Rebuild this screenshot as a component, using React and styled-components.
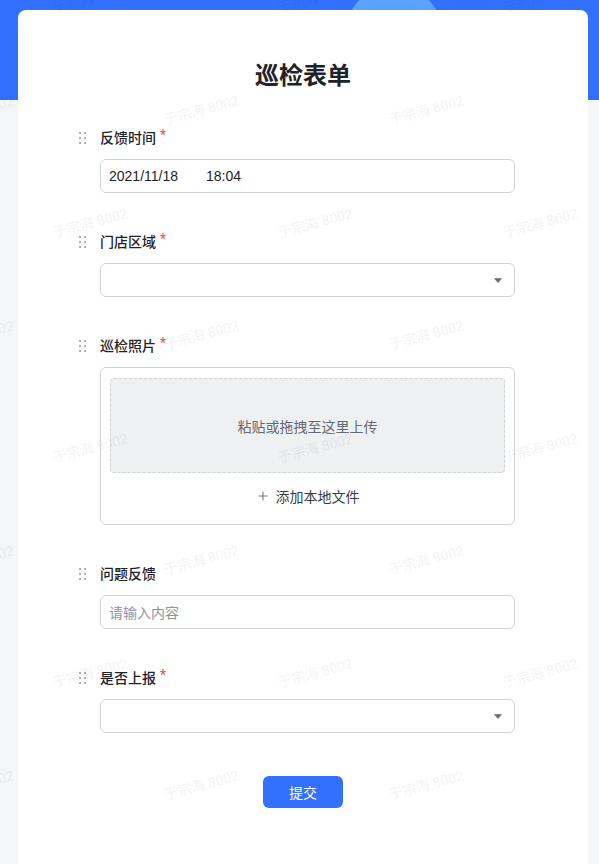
import React from 'react';
import styled, { createGlobalStyle } from 'styled-components';
import { Plus } from 'lucide-react';

const GlobalStyle = createGlobalStyle`
  html, body {
    margin: 0;
    padding: 0;
  }
  body {
    font-family: Roboto, "Noto Sans CJK SC", sans-serif;
    background: #f5f6f7;
    color: #1f2329;
  }
  * {
    box-sizing: border-box;
  }
`;

const Page = styled.div`
  min-height: 864px;
  padding: 10px 11px 0 18px;
  overflow: hidden;
  background:
    radial-gradient(circle at 394px 34px, #5ba3fd 0 48px, transparent 49px) 0 0 / 100% 100px no-repeat,
    linear-gradient(#3370ff, #3370ff) 0 0 / 100% 100px no-repeat,
    #f5f6f7;
`;

const Card = styled.div`
  background: #fff;
  border-radius: 8px 8px 0 0;
  min-height: 900px;
  padding-top: 50px;
`;

const Title = styled.h1`
  margin: 0;
  text-align: center;
  font-size: 24px;
  line-height: 32px;
  font-weight: 600;
  color: #1f2329;
`;

const Form = styled.div`
  display: flex;
  flex-direction: column;
  gap: 38px;
  margin-top: 35px;
  padding: 0 73px 0 61px;
`;

const Field = styled.div`
  display: grid;
  grid-template-columns: 21px 1fr;
  row-gap: 10px;
`;

const Handle = styled.span`
  align-self: center;
  display: grid;
  grid-template-columns: repeat(2, 2px);
  gap: 3px;
`;

const Dot = styled.i`
  width: 2px;
  height: 2px;
  border-radius: 50%;
  background: #8f959e;
`;

const LabelRow = styled.div`
  display: flex;
  height: 22px;
  font-size: 14px;
  line-height: 22px;
  font-weight: 500;
  color: #1f2329;
`;

const Star = styled.span`
  align-self: flex-start;
  margin-left: 4px;
  line-height: 16px;
  font-weight: 400;
  color: #f54a45;
`;

const Control = styled.div`
  grid-column: 2;
`;

const Box = styled.div`
  display: flex;
  align-items: center;
  justify-content: ${({ $select }) => ($select ? 'flex-end' : 'flex-start')};
  height: 34px;
  padding: 0 12px 0 8px;
  border: 1px solid #d0d3d6;
  border-radius: 6px;
  font-size: 14px;
  color: ${({ $placeholder }) => ($placeholder ? '#8f959e' : '#1f2329')};
`;

const Value = styled.span`
  font-family: "Liberation Sans", Arial, sans-serif;
  font-size: 14px;
  margin-left: ${({ $gap }) => $gap || 0}px;
`;

const Upload = styled.div`
  display: flex;
  flex-direction: column;
  padding: 10px 9px 5px;
  border: 1px solid #d0d3d6;
  border-radius: 6px;
`;

const DropArea = styled.div`
  display: flex;
  align-items: center;
  justify-content: center;
  height: 95px;
  background: #eff0f1;
  border: 1px dashed #d0d3d6;
  border-radius: 4px;
  font-size: 14px;
  color: #646a73;
`;

const AddFile = styled.div`
  display: flex;
  align-items: center;
  justify-content: center;
  gap: 6px;
  height: 46px;
  font-size: 14px;
  color: #373c43;
  svg {
    color: #646a73;
  }
`;

const SubmitRow = styled.div`
  display: flex;
  justify-content: center;
  margin-top: 43px;
`;

const Button = styled.button`
  width: 80px;
  height: 32px;
  border: none;
  border-radius: 6px;
  background: #3370ff;
  color: #fff;
  font-family: inherit;
  font-size: 14px;
`;

const WatermarkLayer = styled.div`
  position: fixed;
  inset: 0;
  overflow: hidden;
  pointer-events: none;
  z-index: 10;
`;

const Mark = styled.span`
  position: absolute;
  transform: translate(-50%, -50%) rotate(-15deg);
  white-space: nowrap;
  font-size: 14px;
  color: rgba(31, 35, 41, 0.06);
`;

const Arrow = () => (
  <svg width="8" height="5" viewBox="0 0 8 5">
    <path d="M0.5 0.5h7L4 4.6z" fill="#646a73" stroke="#646a73" strokeWidth="0.6" strokeLinejoin="round" />
  </svg>
);

const DragHandle = () => (
  <Handle>
    {Array.from({ length: 6 }).map((_, i) => (
      <Dot key={i} />
    ))}
  </Handle>
);

const FormField = ({ label, required, children }) => (
  <Field>
    <DragHandle />
    <LabelRow>
      {label}
      {required && <Star>*</Star>}
    </LabelRow>
    <Control>{children}</Control>
  </Field>
);

const marks = [];
for (let row = -1; row < 5; row++) {
  for (let col = -1; col < 4; col++) {
    marks.push({ x: 201 + col * 225, y: 109 + row * 225 });
    marks.push({ x: 90 + col * 225, y: 222 + row * 225 });
  }
}

const App = () => (
  <>
    <GlobalStyle />
    <Page>
      <Card>
        <Title>巡检表单</Title>
        <Form>
          <FormField label="反馈时间" required>
            <Box>
              <Value>2021/11/18</Value>
              <Value $gap={28}>18:04</Value>
            </Box>
          </FormField>
          <FormField label="门店区域" required>
            <Box $select>
              <Arrow />
            </Box>
          </FormField>
          <FormField label="巡检照片" required>
            <Upload>
              <DropArea>粘贴或拖拽至这里上传</DropArea>
              <AddFile>
                <Plus size={14} strokeWidth={1.6} />
                添加本地文件
              </AddFile>
            </Upload>
          </FormField>
          <FormField label="问题反馈">
            <Box $placeholder>请输入内容</Box>
          </FormField>
          <FormField label="是否上报" required>
            <Box $select>
              <Arrow />
            </Box>
          </FormField>
        </Form>
        <SubmitRow>
          <Button>提交</Button>
        </SubmitRow>
      </Card>
    </Page>
    <WatermarkLayer>
      {marks.map((m, i) => (
        <Mark key={i} style={{ left: m.x, top: m.y }}>
          于宗海 8002
        </Mark>
      ))}
    </WatermarkLayer>
  </>
);

export default App;
